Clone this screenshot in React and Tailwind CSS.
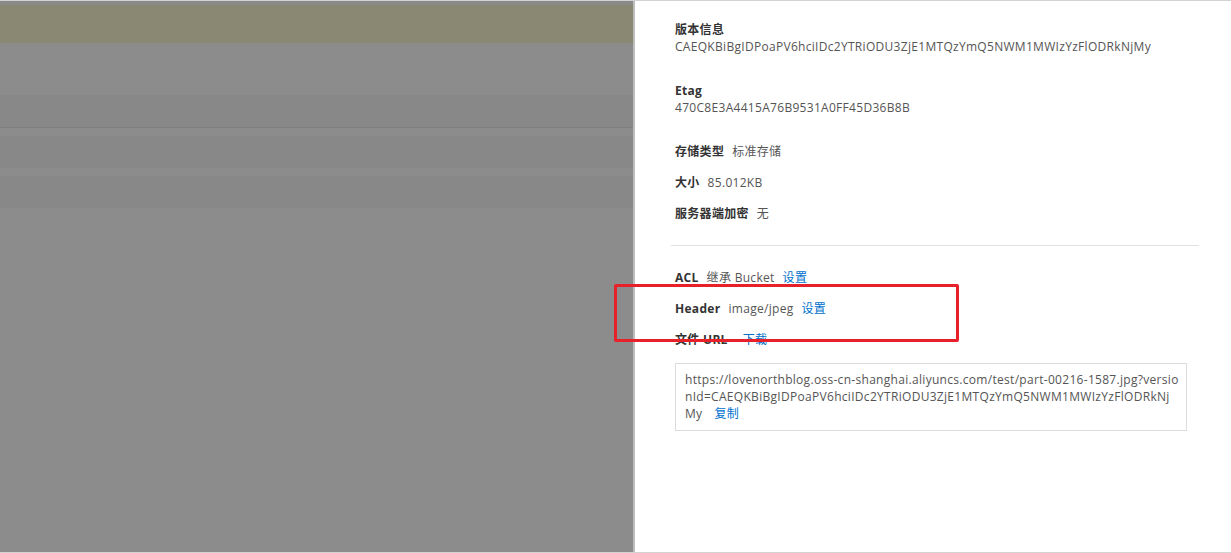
const font = { fontFamily: '"Open Sans", "Noto Sans CJK SC", sans-serif' };

const Row = ({ label, children }) => (
  <div className="flex items-center h-[17px] gap-2 leading-[17px]">
    <span className="font-bold text-[#333]">{label}</span>
    {children}
  </div>
);

const Link = ({ children }) => (
  <span className="text-[#0070cc] cursor-pointer whitespace-nowrap">{children}</span>
);

export default function App() {
  return (
    <div
      className="relative w-[1231px] h-[553px] overflow-hidden bg-white border-t border-b border-[#d2d2d2] text-[12px] tracking-[0.3px]"
      style={font}
    >
      <div className="flex h-full">
        {/* dimmed page behind the drawer */}
        <div className="w-[633px] h-full flex flex-col bg-[#8c8c8c]">
          <div className="h-[4px] bg-[#8a8a8a]" />
          <div className="h-[38px] bg-[#8a8873]" />
          <div className="h-[52px] bg-[#8c8c8c]" />
          <div className="h-[32px] bg-[#888888]" />
          <div className="h-px bg-[#7e7e7e]" />
          <div className="h-[8px] bg-[#8c8c8c]" />
          <div className="h-[32px] bg-[#888888]" />
          <div className="h-[8px] bg-[#8c8c8c]" />
          <div className="h-[32px] bg-[#888888]" />
        </div>
        <div className="w-[2px] h-full bg-[#bdbdbd]" />

        {/* drawer */}
        <div className="flex-1 pt-[20px] text-[#555]">
          <div className="pl-[40px]">
            <div className="leading-[17px]">
              <div className="font-bold text-[#333]">版本信息</div>
              <div>CAEQKBiBgIDPoaPV6hciIDc2YTRiODU3ZjE1MTQzYmQ5NWM1MWIzYzFlODRkNjMy</div>
            </div>
            <div className="leading-[17px] mt-[27px]">
              <div className="font-bold text-[#333]">Etag</div>
              <div>470C8E3A4415A76B9531A0FF45D36B8B</div>
            </div>
            <div className="mt-[27px] flex flex-col gap-[14px]">
              <Row label="存储类型">
                <span>标准存储</span>
              </Row>
              <Row label="大小">
                <span>85.012KB</span>
              </Row>
              <Row label="服务器端加密">
                <span>无</span>
              </Row>
            </div>
          </div>

          <div className="ml-[36px] mr-[32px] mt-[23px] h-px bg-[#e2e2e2]" />

          <div className="pl-[40px] mt-[23px] flex flex-col gap-[14px]">
            <Row label="ACL">
              <span>继承 Bucket</span>
              <Link>设置</Link>
            </Row>
            <Row label="Header">
              <span>image/jpeg</span>
              <Link>设置</Link>
            </Row>
            <Row label="文件 URL">
              <span className="ml-[7px]">
                <Link>下载</Link>
              </span>
            </Row>
          </div>

          <div className="ml-[40px] mt-[15px] w-[512px] border border-[#dcdcdc] pl-[9px] pr-[6px] pt-[7px] pb-[8px] leading-[17px] break-all">
            https://lovenorthblog.oss-cn-shanghai.aliyuncs.com/test/part-00216-1587.jpg?versionId=CAEQKBiBgIDPoaPV6hciIDc2YTRiODU3ZjE1MTQzYmQ5NWM1MWIzYzFlODRkNjMy
            <span className="ml-[12px] inline-block">
              <Link>复制</Link>
            </span>
          </div>
        </div>
      </div>

      {/* annotation box */}
      <div className="absolute left-[614px] top-[283px] w-[345px] h-[58px] border-[3px] border-[#e8202a] rounded-[2px]" />
    </div>
  );
}
